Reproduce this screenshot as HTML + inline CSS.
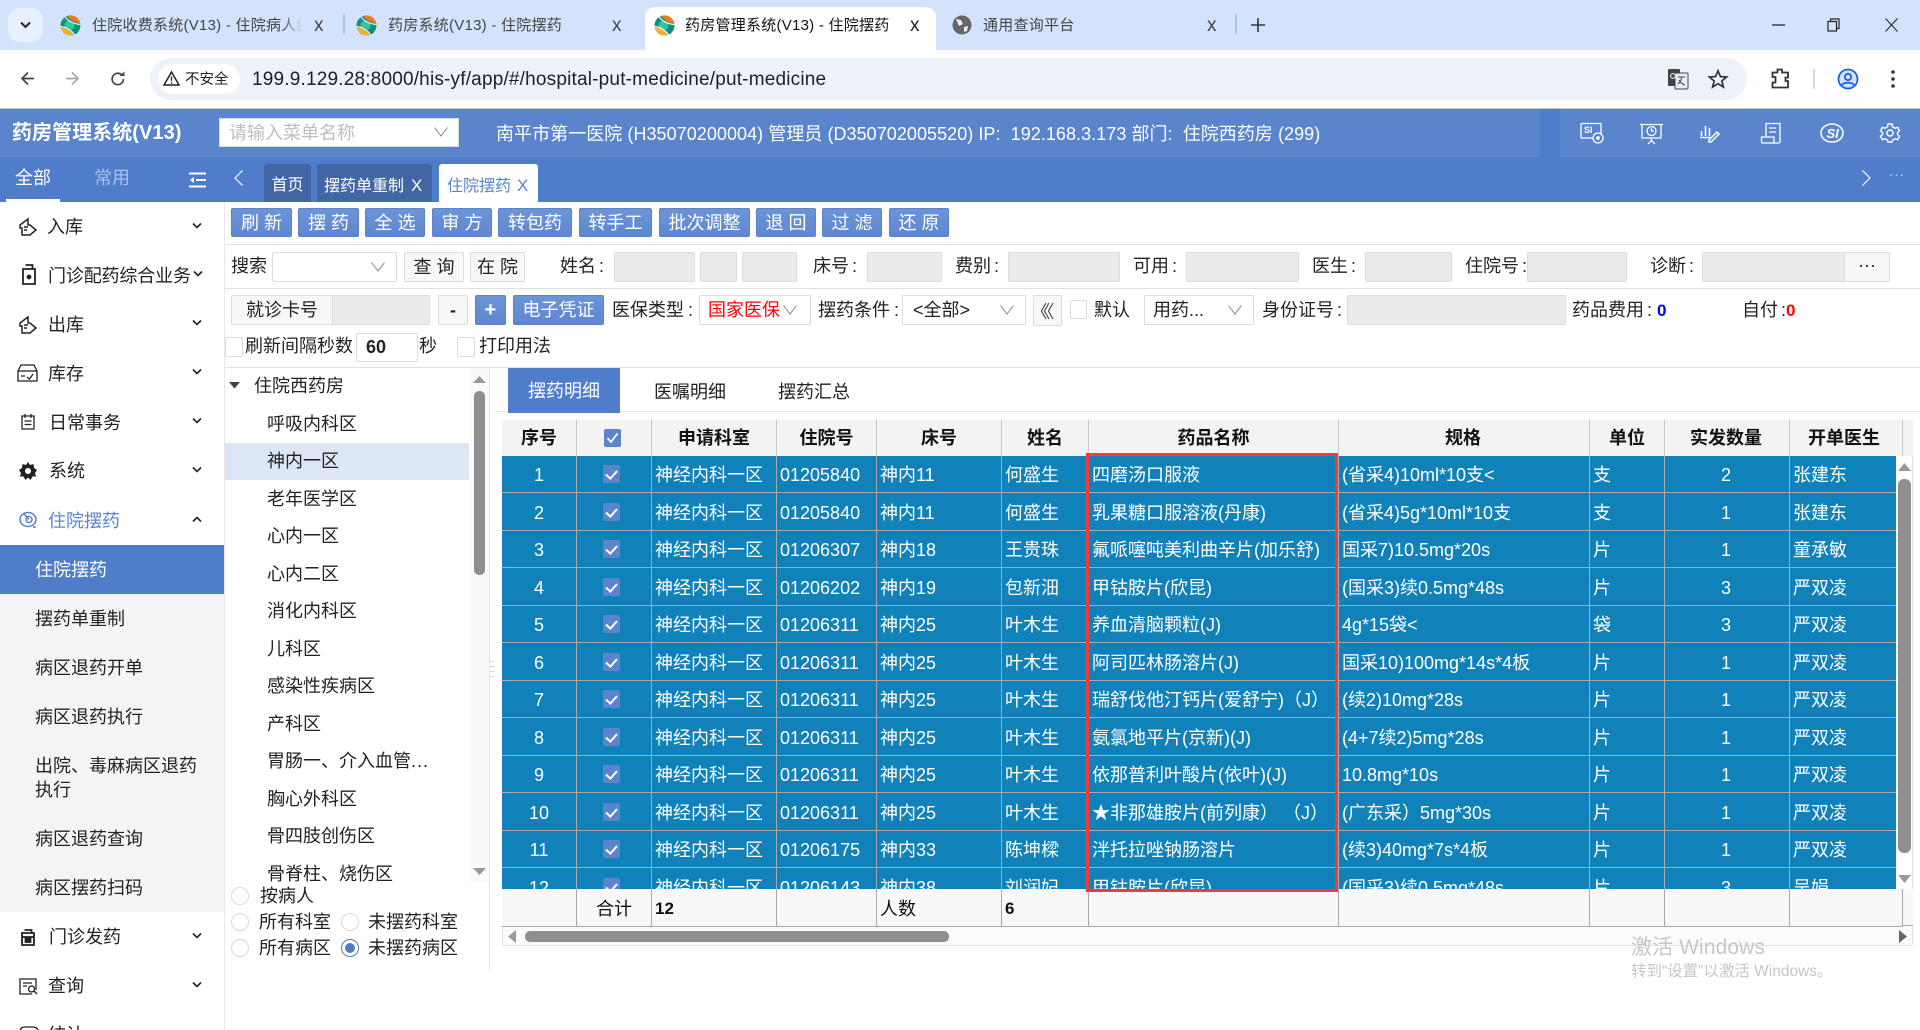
<!DOCTYPE html>
<html lang="zh-CN"><head><meta charset="utf-8"><title>药房管理系统(V13) - 住院摆药</title>
<style>
*{box-sizing:border-box}
html,body{margin:0;padding:0;width:1920px;height:1030px;overflow:hidden;background:#fff}
body{position:relative;font-family:"Liberation Sans","Noto Sans CJK SC",sans-serif;font-size:18px;color:#222}
.a{position:absolute}
.t{position:absolute;white-space:nowrap;line-height:26px;height:26px}
svg{position:absolute;overflow:visible}
.tab{font-size:15px;color:#444;line-height:20px;height:20px;top:16px;letter-spacing:.25px}
.x{position:absolute;top:16px;font-size:19px;line-height:20px;color:#444;font-family:"Liberation Sans",sans-serif}
.btn{position:absolute;top:208px;height:29px;background:linear-gradient(#6c94d8,#5f87ce);border:1px solid #5a83cc;border-radius:2px;color:#fff;text-align:center;line-height:29px;font-size:18px;white-space:nowrap}
.inp{position:absolute;background:#ebebeb;border:1px solid #dcdcdc;border-radius:2px}
.wbtn{position:absolute;background:#f7f7f7;border:1px solid #dcdcdc;border-radius:2px;text-align:center;font-size:18px;white-space:nowrap}
.sel{position:absolute;background:#fff;border:1px solid #dcdcdc;border-radius:2px;white-space:nowrap;font-size:18px}
.chk{position:absolute;width:18px;height:20px;border:1px solid #dcdcdc;border-radius:2px;background:#fff}
.menu{position:absolute;left:48px;line-height:26px;height:26px;font-size:18px;white-space:nowrap;color:#222}
.sub{position:absolute;left:35px;line-height:24px;font-size:18px;color:#222;white-space:nowrap}
.chev{position:absolute;left:192px;width:10px;height:10px}
.tree{position:absolute;left:267px;line-height:26px;height:26px;font-size:18px;white-space:nowrap}
.radio{position:absolute;width:18px;height:18px;border:1px solid #d9d9d9;border-radius:50%;background:#fff}
table{border-collapse:separate;border-spacing:0;table-layout:fixed;position:absolute}
#hd td{height:36px;background:#f3f3f3;font-weight:bold;text-align:center;border-right:1px solid #c8c8c8;color:#111;padding:0;line-height:36px;font-size:18px;white-space:nowrap}
#hd span{position:relative}
#bd td{background:#1182b9;color:#fff;border-right:1px solid #a9a9a9;border-bottom:1px solid #a9a9a9;padding:2px 0 0 3px;font-size:18px;white-space:nowrap;overflow:hidden;line-height:26px}
#bd tr:nth-child(odd) td{height:37px}
#bd tr:nth-child(even) td{height:38px}
#bd td.c{text-align:center;padding:2px 0 0 0}
#bd td.q{text-align:center;padding:2px 2px 0 0}
#bd i{display:block;position:relative;left:-3px;top:-1px;width:17px;height:18px;margin:0 auto;background:#5b84cc;border-radius:2px}
#bd i:after{content:"";position:absolute;left:5px;top:3px;width:5px;height:9px;border:solid #fff;border-width:0 2px 2px 0;transform:rotate(42deg)}
#ft td{height:37px;background:#f8f8f8;border-right:1px solid #a9a9a9;border-bottom:1px solid #a9a9a9;padding:2px 0 0 3px;color:#111;font-size:18px;white-space:nowrap;line-height:34px}
</style></head><body>

<!-- browser tab strip -->
<div class="a" style="left:0;top:0;width:1920px;height:50px;background:#d3e3fd"></div>
<div class="a" style="left:8px;top:8px;width:35px;height:34px;background:#e9f0fd;border-radius:12px"></div>
<svg style="left:20px;top:21px" width="11" height="8" viewBox="0 0 11 8"><path d="M1 1.500L5.500 6 10 1.500" fill="none" stroke="#222" stroke-width="2"/></svg>
<svg style="left:60px;top:15px" width="21" height="21" viewBox="0 0 21 21"><circle cx="10.500" cy="10.500" r="10" fill="#0f8f7c"/><circle cx="9.500" cy="10.500" r="5" fill="#39c2a0"/><path d="M7 1A10 10 0 0 1 20.300 8.500C16 8 11.500 6 7 1Z" fill="#ee7a1a"/><path d="M.7 12.500A10 10 0 0 0 13.500 20C11.500 16 6 13 .7 12.500Z" fill="#f2b32a"/><path d="M5 1.800C8 6 13 8.800 20.500 9.500M.5 11.500C6 12 12 15.500 14.500 19.800" fill="none" stroke="#e8f1fd" stroke-width="1.200"/></svg>
<div class="t tab" style="left:92px;width:210px;overflow:hidden;-webkit-mask-image:linear-gradient(90deg,#000 190px,transparent 210px)">住院收费系统(V13) - 住院病人结算</div>
<div class="x" style="left:314px">x</div>
<div class="a" style="left:343px;top:14px;width:2px;height:20px;background:#a8c3ec"></div>
<svg style="left:356px;top:15px" width="21" height="21" viewBox="0 0 21 21"><circle cx="10.500" cy="10.500" r="10" fill="#0f8f7c"/><circle cx="9.500" cy="10.500" r="5" fill="#39c2a0"/><path d="M7 1A10 10 0 0 1 20.300 8.500C16 8 11.500 6 7 1Z" fill="#ee7a1a"/><path d="M.7 12.500A10 10 0 0 0 13.500 20C11.500 16 6 13 .7 12.500Z" fill="#f2b32a"/><path d="M5 1.800C8 6 13 8.800 20.500 9.500M.5 11.500C6 12 12 15.500 14.500 19.800" fill="none" stroke="#e8f1fd" stroke-width="1.200"/></svg>
<div class="t tab" style="left:388px">药房系统(V13) - 住院摆药</div>
<div class="x" style="left:612px">x</div>
<div class="a" style="left:645px;top:7px;width:291px;height:43px;background:#fff;border-radius:10px 10px 0 0"></div>
<svg style="left:654px;top:15px" width="21" height="21" viewBox="0 0 21 21"><circle cx="10.500" cy="10.500" r="10" fill="#0f8f7c"/><circle cx="9.500" cy="10.500" r="5" fill="#39c2a0"/><path d="M7 1A10 10 0 0 1 20.300 8.500C16 8 11.500 6 7 1Z" fill="#ee7a1a"/><path d="M.7 12.500A10 10 0 0 0 13.500 20C11.500 16 6 13 .7 12.500Z" fill="#f2b32a"/><path d="M5 1.800C8 6 13 8.800 20.500 9.500M.5 11.500C6 12 12 15.500 14.500 19.800" fill="none" stroke="#fff" stroke-width="1.200"/></svg>
<div class="t tab" style="left:685px;color:#111">药房管理系统(V13) - 住院摆药</div>
<div class="x" style="left:910px;color:#222">x</div>
<svg style="left:952px;top:15px" width="20" height="20" viewBox="0 0 20 20"><circle cx="10" cy="10" r="9.500" fill="#666"/><path d="M4 4l5 1 2 4-4 2zM12 12l4-1-1 5-3 1z" fill="#e8eefb"/></svg>
<div class="t tab" style="left:983px">通用查询平台</div>
<div class="x" style="left:1207px">x</div>
<div class="a" style="left:1235px;top:14px;width:2px;height:20px;background:#a8c3ec"></div>
<svg style="left:1251px;top:18px" width="14" height="14" viewBox="0 0 14 14"><path d="M7 0V14M0 7H14" stroke="#333" stroke-width="1.600"/></svg>
<svg style="left:1772px;top:24px" width="13" height="2" viewBox="0 0 13 2"><path d="M0 1H13" stroke="#222" stroke-width="1.300"/></svg>
<svg style="left:1827px;top:18px" width="13" height="14" viewBox="0 0 13 14"><path d="M1 3.500H9.500V13H1ZM3.500 3.500V1H12V10.500H9.500" fill="none" stroke="#222" stroke-width="1.200"/></svg>
<svg style="left:1885px;top:18px" width="13" height="14" viewBox="0 0 13 14"><path d="M.5 .5L12.500 13.500M12.500 .5L.5 13.500" stroke="#222" stroke-width="1"/></svg>

<!-- browser toolbar -->
<div class="a" style="left:0;top:50px;width:1920px;height:59px;background:#fff;border-radius:10px 10px 0 0;border-bottom:1px solid #c8c8c8"></div>
<svg style="left:20px;top:71px" width="15" height="15" viewBox="0 0 15 15"><path d="M14 7.500H2M8 1.500L2 7.500l6 6" fill="none" stroke="#444" stroke-width="1.700"/></svg>
<svg style="left:65px;top:71px" width="15" height="15" viewBox="0 0 15 15"><path d="M1 7.500H13M7 1.500l6 6-6 6" fill="none" stroke="#aaa" stroke-width="1.700"/></svg>
<svg style="left:110px;top:71px" width="16" height="16" viewBox="0 0 16 16"><path d="M13.500 8A5.700 5.700 0 1 1 11.800 3.900" fill="none" stroke="#444" stroke-width="1.700"/><path d="M9.500 5h5V.5z" fill="#444"/></svg>
<div class="a" style="left:150px;top:58px;width:1597px;height:42px;background:#edf2fa;border-radius:21px"></div>
<div class="a" style="left:158px;top:64px;width:82px;height:30px;background:#fff;border-radius:15px"></div>
<svg style="left:163px;top:70px" width="17" height="17" viewBox="0 0 17 17"><path d="M8.500 2L16 15H1Z" fill="none" stroke="#222" stroke-width="1.500"/><path d="M8.500 6.500V11M8.500 12.200V13.800" stroke="#222" stroke-width="1.300"/></svg>
<div class="t" style="left:185px;top:69px;font-size:14.500px;line-height:22px;height:22px;color:#222">不安全</div>
<div class="t" style="left:252px;top:67px;font-size:19px;color:#1f1f1f;letter-spacing:.19px">199.9.129.28:8000/his-yf/app/#/hospital-put-medicine/put-medicine</div>
<svg style="left:1667px;top:68px" width="22" height="22" viewBox="0 0 22 22"><rect x="1" y="1" width="12" height="17" rx="1" fill="#444"/><rect x="8" y="5" width="13" height="16" rx="1" fill="#e8edf5" stroke="#444"/><path d="M11 9h7M14.500 9v1c-.5 3-2 5-4 6M12 12c1 2 3 4 6 5" fill="none" stroke="#444"/><circle cx="6" cy="8" r="2.400" fill="none" stroke="#fff"/></svg>
<svg style="left:1708px;top:69px" width="20" height="20" viewBox="0 0 20 20"><path d="M10 1.800L12.400 7.600 18.600 8 13.800 12 15.400 18 10 14.700 4.600 18 6.200 12 1.400 8 7.600 7.600Z" fill="none" stroke="#333" stroke-width="1.700"/></svg>
<svg style="left:1771px;top:68px" width="19" height="21" viewBox="0 0 19 21"><path d="M1.500 4.500H6.500V1.500H11V4.500H17V9.500H14.500V13H17V19.500H1.500V14.500H4.500V9H1.500Z" fill="none" stroke="#333" stroke-width="1.800"/></svg>
<div class="a" style="left:1813px;top:69px;width:2px;height:20px;background:#c7d7ef"></div>
<svg style="left:1837px;top:68px" width="22" height="22" viewBox="0 0 22 22"><circle cx="11" cy="11" r="9.500" fill="#d3e3fd" stroke="#1a63d8" stroke-width="1.800"/><circle cx="11" cy="9" r="3.200" fill="none" stroke="#1a63d8" stroke-width="1.800"/><path d="M5 17c2-3 10-3 12 0" fill="none" stroke="#1a63d8" stroke-width="1.800"/></svg>
<svg style="left:1891px;top:70px" width="4" height="18" viewBox="0 0 4 18"><circle cx="2" cy="2" r="1.800" fill="#333"/><circle cx="2" cy="9" r="1.800" fill="#333"/><circle cx="2" cy="16" r="1.800" fill="#333"/></svg>

<!-- app header -->
<div class="a" style="left:0;top:109px;width:1920px;height:48px;background:#5a84cc"></div>
<div class="a" style="left:1540px;top:109px;width:20px;height:48px;background:#4f7dc9"></div>
<div class="t" style="left:12px;top:120px;font-size:20px;font-weight:bold;color:#fff;letter-spacing:.05px">药房管理系统(V13)</div>
<div class="a" style="left:219px;top:118px;width:240px;height:29px;background:#fff;border:1px solid #dcdcdc"></div>
<div class="t" style="left:229px;top:120px;color:#bdbdbd">请输入菜单名称</div>
<svg style="left:434px;top:127px" width="14" height="10" viewBox="0 0 14 10"><path d="M.5 .5L7 9 13.500 .5" fill="none" stroke="#888" stroke-width="1"/></svg>
<div class="t" style="left:496px;top:121px;font-size:18px;color:#fff;letter-spacing:.05px">南平市第一医院 (H35070200004) 管理员 (D350702005520) IP:&nbsp; 192.168.3.173 部门:&nbsp; 住院西药房 (299)</div>

<svg style="left:1580px;top:122px" width="24" height="22" viewBox="0 0 24 22" fill="none" stroke="#fff" stroke-width="1.300"><path d="M21 13V2.500Q21 1.500 20 1.500H2Q1 1.500 1 2.500V15Q1 16 2 16H13"/><circle cx="18" cy="16" r="5"/><circle cx="18" cy="16" r="1.200" fill="#fff"/><text x="4" y="11" font-size="9" fill="#fff" stroke="none" font-weight="bold" font-family="Liberation Sans">SI</text></svg>
<svg style="left:1640px;top:123px" width="23" height="22" viewBox="0 0 23 22" fill="none" stroke="#fff" stroke-width="1.300"><path d="M0 1.500H23M2 1.500V15H21V1.500M11.500 15V19"/><circle cx="11.500" cy="8" r="4.500"/><path d="M11.500 5V8H14" /><path d="M8 21L11.500 17.500 15 21"/></svg>
<svg style="left:1700px;top:122px" width="20" height="22" viewBox="0 0 20 22" fill="none" stroke="#fff" stroke-width="1.500"><path d="M1.500 9V14M5.500 4V14M9.500 6V14M0 15.500H11"/><path d="M17 10L19 12 11 20H9V18Z"/></svg>
<svg style="left:1761px;top:122px" width="20" height="22" viewBox="0 0 20 22" fill="none" stroke="#fff" stroke-width="1.300"><path d="M5 1.500H19V19Q19 21 17 21H2Q.5 21 .5 19V15H5ZM5 15H13V21M8 6H15M8 10H15"/></svg>
<svg style="left:1820px;top:123px" width="24" height="20" viewBox="0 0 24 20" fill="none" stroke="#fff" stroke-width="1.500"><ellipse cx="12" cy="10" rx="11" ry="9"/><text x="6.500" y="15" font-size="13" fill="#fff" stroke="none" font-weight="bold" font-style="italic" font-family="Liberation Sans">SI</text></svg>
<svg style="left:1880px;top:123px" width="20" height="20" viewBox="0 0 20 20" fill="none" stroke="#fff" stroke-width="1.400"><path d="M8 1H12L12.600 3.800 15 5.200 17.700 4.300 19.500 7.700 17.500 9.500V11.500L19.500 13.300 17.700 16.700 15 15.800 12.600 17.200 12 19H8L7.400 17.200 5 15.800 2.300 16.700.5 13.300 2.500 11.500V9.500L.5 7.700 2.300 4.300 5 5.200 7.400 3.800Z"/><circle cx="10" cy="10" r="3"/></svg>

<!-- tab row -->
<div class="a" style="left:0;top:157px;width:1920px;height:45px;background:#4f7dc9"></div>
<div class="t" style="left:15px;top:165px;color:#fff">全部</div>
<div class="t" style="left:94px;top:165px;color:#a9c0e6">常用</div>
<div class="a" style="left:6px;top:199px;width:54px;height:3px;background:#fff"></div>
<svg style="left:189px;top:172px" width="17" height="16" viewBox="0 0 17 16"><path d="M0 1.500H17M7 8H17M0 14.500H17" stroke="#fff" stroke-width="2"/><path d="M5 5L1 8 5 11Z" fill="#fff"/></svg>
<svg style="left:234px;top:170px" width="9" height="16" viewBox="0 0 9 16"><path d="M8.500 .5L1 8 8.500 15.500" fill="none" stroke="#fff" stroke-width="1.200"/></svg>
<div class="a" style="left:264px;top:164px;width:47px;height:38px;background:#4265a4;border-radius:3px 3px 0 0;color:#fff;text-align:center;line-height:44px;font-size:16px">首页</div>
<div class="a" style="left:317px;top:164px;width:115px;height:38px;background:#4265a4;border-radius:3px 3px 0 0;color:#fff;line-height:44px;padding-left:7px;font-size:16px;white-space:nowrap">摆药单重制<span style="font-size:17px;margin-left:7px">X</span></div>
<div class="a" style="left:439px;top:164px;width:99px;height:38px;background:#fff;border-radius:3px 3px 0 0;color:#5a84cc;line-height:44px;padding-left:8px;font-size:16px;white-space:nowrap">住院摆药<span style="font-size:17px;margin-left:6px">X</span></div>
<svg style="left:1862px;top:170px" width="9" height="16" viewBox="0 0 9 16"><path d="M.5 .5L8 8 .5 15.500" fill="none" stroke="#fff" stroke-width="1.200"/></svg>
<div class="t" style="left:1889px;top:165px;color:#cfdcf2;font-size:13px;line-height:20px;letter-spacing:1px">···</div>

<!-- sidebar -->
<div class="a" style="left:224px;top:202px;width:1px;height:828px;background:#e8e8e8"></div>
<div class="a" style="left:0;top:545px;width:224px;height:367px;background:#f4f4f4"></div>
<div class="a" style="left:0;top:545px;width:224px;height:49px;background:#4f7dc9"></div>

<svg style="left:19px;top:218px" width="18" height="18" viewBox="0 0 18 18" fill="none" stroke="#222" stroke-width="1.500"><path d="M9 1L1 7V10H3V17H11L17 12 11 7H9L9 1ZM5 9H9M5 12H8"/></svg>
<div class="menu" style="top:214px;left:47px">入库</div>
<svg style="left:22px;top:264px" width="14" height="22" viewBox="0 0 14 22" fill="none" stroke="#222" stroke-width="1.800"><path d="M3.500 1H10.500V5M1 5H13V20H1Z"/><circle cx="7" cy="13" r="1.500" fill="#222"/></svg>
<div class="menu" style="top:263px;font-size:18px;letter-spacing:-.15px">门诊配药综合业务</div>
<svg style="left:19px;top:316px" width="18" height="18" viewBox="0 0 18 18" fill="none" stroke="#222" stroke-width="1.500"><path d="M9 1L1 7V10H3V17H11L17 12 11 7H9L9 1ZM5 9H9M5 12H8"/></svg>
<div class="menu" style="top:312px">出库</div>
<svg style="left:17px;top:364px" width="21" height="18" viewBox="0 0 21 18" fill="none" stroke="#222" stroke-width="1.300"><path d="M1 7L4 1H17L20 7V17H1ZM1 7H20M4 12H8M10 13L12.500 15 16 10"/></svg>
<div class="menu" style="top:361px">库存</div>
<svg style="left:21px;top:413px" width="14" height="18" viewBox="0 0 14 18" fill="none" stroke="#222" stroke-width="1.300"><path d="M1 3H13V16H1ZM4 1V5M10 1V5M3.500 8H10.500M3.500 11.500H10.500"/></svg>
<div class="menu" style="top:410px;left:49px">日常事务</div>
<svg style="left:19px;top:462px" width="18" height="18" viewBox="0 0 18 18"><path d="M9 0L11 3 14.500 2 15 6 18 8 16 11 17 14.500 13.500 14.500 11.500 18 9 15.500 6.500 18 4.500 14.500 1 14.500 2 11 0 8 3 6 3.500 2 7 3Z" fill="#222"/><circle cx="9" cy="9" r="3" fill="#fff"/></svg>
<div class="menu" style="top:458px;left:49px">系统</div>
<svg style="left:19px;top:511px" width="18" height="18" viewBox="0 0 18 18" fill="none" stroke="#5a84cc" stroke-width="1.500"><ellipse cx="9" cy="8.500" rx="8" ry="7"/><circle cx="10" cy="8.500" r="3"/><path d="M14 16H17M5 3L10 8.500"/></svg>
<div class="menu" style="top:508px;color:#5a84cc">住院摆药</div>
<div class="sub" style="top:558px;color:#fff">住院摆药</div>
<div class="sub" style="top:607px">摆药单重制</div>
<div class="sub" style="top:656px">病区退药开单</div>
<div class="sub" style="top:705px">病区退药执行</div>
<div class="sub" style="top:754px">出院、毒麻病区退药</div>
<div class="sub" style="top:778px">执行</div>
<div class="sub" style="top:827px">病区退药查询</div>
<div class="sub" style="top:876px">病区摆药扫码</div>
<svg style="left:21px;top:929px" width="14" height="18" viewBox="0 0 14 18" fill="none" stroke="#222" stroke-width="1.800"><path d="M3.500 1H10.500V4M1 4H13V16H1ZM1 8H13"/><rect x="4.500" y="9" width="5" height="4" fill="#222"/></svg>
<div class="menu" style="top:924px;left:49px">门诊发药</div>
<svg style="left:19px;top:978px" width="20" height="17" viewBox="0 0 20 17" fill="none" stroke="#222" stroke-width="1.300"><path d="M17 12V1H1V16H13M4 5H13M4 8H8"/><circle cx="12.500" cy="11" r="3"/><path d="M15 13L18 16"/></svg>
<div class="menu" style="top:973px">查询</div>
<svg style="left:19px;top:1026px" width="20" height="12" viewBox="0 0 20 12" fill="none" stroke="#222" stroke-width="1.300"><path d="M1 12V6Q1 1 6 1H14Q19 1 19 6"/></svg>
<div class="menu" style="top:1022px">统计</div>
<svg class="chev" style="top:221px" viewBox="0 0 10 10"><path d="M1 2.500L5 6.500 9 2.500" fill="none" stroke="#222" stroke-width="1.600"/></svg>
<svg class="chev" style="top:269px;left:193px" viewBox="0 0 10 10"><path d="M1 2.500L5 6.500 9 2.500" fill="none" stroke="#222" stroke-width="1.600"/></svg>
<svg class="chev" style="top:318px" viewBox="0 0 10 10"><path d="M1 2.500L5 6.500 9 2.500" fill="none" stroke="#222" stroke-width="1.600"/></svg>
<svg class="chev" style="top:367px" viewBox="0 0 10 10"><path d="M1 2.500L5 6.500 9 2.500" fill="none" stroke="#222" stroke-width="1.600"/></svg>
<svg class="chev" style="top:416px" viewBox="0 0 10 10"><path d="M1 2.500L5 6.500 9 2.500" fill="none" stroke="#222" stroke-width="1.600"/></svg>
<svg class="chev" style="top:465px" viewBox="0 0 10 10"><path d="M1 2.500L5 6.500 9 2.500" fill="none" stroke="#222" stroke-width="1.600"/></svg>
<svg class="chev" style="top:515px" viewBox="0 0 10 10"><path d="M1 6.500L5 2.500 9 6.500" fill="none" stroke="#222" stroke-width="1.600"/></svg>
<svg class="chev" style="top:931px" viewBox="0 0 10 10"><path d="M1 2.500L5 6.500 9 2.500" fill="none" stroke="#222" stroke-width="1.600"/></svg>
<svg class="chev" style="top:980px" viewBox="0 0 10 10"><path d="M1 2.500L5 6.500 9 2.500" fill="none" stroke="#222" stroke-width="1.600"/></svg>

<!-- toolbar buttons -->
<div class="btn" style="left:231px;width:61px">刷 新</div>
<div class="btn" style="left:298px;width:61px">摆 药</div>
<div class="btn" style="left:365px;width:60px">全 选</div>
<div class="btn" style="left:432px;width:60px">审 方</div>
<div class="btn" style="left:498px;width:74px">转包药</div>
<div class="btn" style="left:579px;width:73px">转手工</div>
<div class="btn" style="left:659px;width:91px">批次调整</div>
<div class="btn" style="left:756px;width:60px">退 回</div>
<div class="btn" style="left:822px;width:60px">过 滤</div>
<div class="btn" style="left:889px;width:60px">还 原</div>
<div class="a" style="left:225px;top:244px;width:1695px;height:1px;background:#e0e0e0"></div>

<!-- row 2 -->
<div class="t" style="left:231px;top:253px">搜索</div>
<div class="sel" style="left:272px;top:252px;width:125px;height:30px"></div>
<svg style="left:371px;top:262px" width="14" height="10" viewBox="0 0 14 10"><path d="M.5 .5L7 9 13.500 .5" fill="none" stroke="#888"/></svg>
<div class="wbtn" style="left:404px;top:252px;width:60px;height:30px;line-height:28px">查 询</div>
<div class="wbtn" style="left:470px;top:252px;width:55px;height:30px;line-height:28px">在 院</div>
<div class="t" style="left:560px;top:253px">姓名<span style="margin-left:3px">:</span></div>
<div class="inp" style="left:614px;top:252px;width:81px;height:30px"></div>
<div class="inp" style="left:700px;top:252px;width:37px;height:30px"></div>
<div class="inp" style="left:742px;top:252px;width:55px;height:30px"></div>
<div class="t" style="left:813px;top:253px">床号<span style="margin-left:3px">:</span></div>
<div class="inp" style="left:867px;top:252px;width:75px;height:30px"></div>
<div class="t" style="left:955px;top:253px">费别<span style="margin-left:3px">:</span></div>
<div class="inp" style="left:1008px;top:252px;width:112px;height:30px"></div>
<div class="t" style="left:1133px;top:253px">可用<span style="margin-left:3px">:</span></div>
<div class="inp" style="left:1186px;top:252px;width:113px;height:30px"></div>
<div class="t" style="left:1312px;top:253px">医生<span style="margin-left:3px">:</span></div>
<div class="inp" style="left:1365px;top:252px;width:87px;height:30px"></div>
<div class="t" style="left:1465px;top:253px">住院号<span style="margin-left:3px">:</span></div>
<div class="inp" style="left:1527px;top:252px;width:100px;height:30px"></div>
<div class="t" style="left:1650px;top:253px">诊断<span style="margin-left:3px">:</span></div>
<div class="inp" style="left:1702px;top:252px;width:143px;height:30px;border-radius:2px 0 0 2px"></div>
<div class="wbtn" style="left:1844px;top:252px;width:46px;height:30px;line-height:24px;border-radius:0 2px 2px 0">···</div>
<div class="a" style="left:225px;top:288px;width:1695px;height:1px;background:#e0e0e0"></div>

<!-- row 3 -->
<div class="wbtn" style="left:231px;top:295px;width:102px;height:30px;line-height:28px;border-radius:2px 0 0 2px">就诊卡号</div>
<div class="inp" style="left:332px;top:295px;width:98px;height:30px;border-radius:0 2px 2px 0"></div>
<div class="wbtn" style="left:438px;top:295px;width:30px;height:30px;line-height:28px;font-weight:bold">-</div>
<div class="btn" style="left:475px;top:295px;width:31px;height:30px;font-size:20px;font-weight:bold;line-height:28px">+</div>
<div class="btn" style="left:513px;top:295px;width:91px;height:30px;line-height:28px">电子凭证</div>
<div class="t" style="left:612px;top:297px">医保类型<span style="margin-left:4px">:</span></div>
<div class="sel" style="left:699px;top:295px;width:112px;height:30px;color:#f00;line-height:28px;padding-left:8px">国家医保</div>
<svg style="left:783px;top:305px" width="14" height="10" viewBox="0 0 14 10"><path d="M.5 .5L7 9 13.500 .5" fill="none" stroke="#888"/></svg>
<div class="t" style="left:818px;top:297px">摆药条件<span style="margin-left:4px">:</span></div>
<div class="sel" style="left:902px;top:295px;width:124px;height:30px;line-height:28px;padding-left:10px">&lt;全部&gt;</div>
<svg style="left:1000px;top:305px" width="14" height="10" viewBox="0 0 14 10"><path d="M.5 .5L7 9 13.500 .5" fill="none" stroke="#888"/></svg>
<div class="wbtn" style="left:1033px;top:295px;width:29px;height:31px"></div>
<svg style="left:1040px;top:303px" width="15" height="16" viewBox="0 0 15 16"><path d="M6 0L1.500 8 6 16M9 0L4.500 8 9 16M13 0L8.500 8 13 16" fill="none" stroke="#444" stroke-width="1.100"/></svg>
<div class="chk" style="left:1070px;top:300px;width:17px;height:19px"></div>
<div class="t" style="left:1094px;top:297px">默认</div>
<div class="sel" style="left:1144px;top:295px;width:110px;height:30px;line-height:28px;padding-left:8px">用药...</div>
<svg style="left:1228px;top:305px" width="14" height="10" viewBox="0 0 14 10"><path d="M.5 .5L7 9 13.500 .5" fill="none" stroke="#888"/></svg>
<div class="t" style="left:1262px;top:297px">身份证号<span style="margin-left:3px">:</span></div>
<div class="inp" style="left:1347px;top:295px;width:219px;height:30px"></div>
<div class="t" style="left:1572px;top:297px">药品费用<span style="margin-left:3px">:</span> <b style="color:#00f;font-weight:bold;font-size:17px">0</b></div>
<div class="t" style="left:1742px;top:297px">自付<span style="margin-left:3px">:</span><b style="color:#f00;font-weight:bold;font-size:17px">0</b></div>

<!-- row 4 -->
<div class="chk" style="left:225px;top:337px"></div>
<div class="t" style="left:245px;top:333px;letter-spacing:0">刷新间隔秒数</div>
<div class="sel" style="left:356px;top:333px;width:62px;height:29px;line-height:27px;padding-left:9px;font-weight:bold;font-size:18px">60</div>
<div class="t" style="left:419px;top:333px">秒</div>
<div class="chk" style="left:457px;top:337px"></div>
<div class="t" style="left:479px;top:333px">打印用法</div>
<div class="a" style="left:225px;top:367px;width:1695px;height:1px;background:#e0e0e0"></div>

<!-- tree -->
<div class="a" style="left:489px;top:368px;width:1px;height:602px;background:#e4e4e4"></div>
<div class="a" style="left:225px;top:443px;width:244px;height:37px;background:#dce6f5"></div>
<svg style="left:229px;top:382px" width="11" height="7" viewBox="0 0 11 7"><path d="M0 0H11L5.500 6.500Z" fill="#444"/></svg>
<div class="tree" style="left:254px;top:373px">住院西药房</div>
<div class="tree" style="top:411px">呼吸内科区</div>
<div class="tree" style="top:448px">神内一区</div>
<div class="tree" style="top:486px">老年医学区</div>
<div class="tree" style="top:523px">心内一区</div>
<div class="tree" style="top:561px">心内二区</div>
<div class="tree" style="top:598px">消化内科区</div>
<div class="tree" style="top:636px">儿科区</div>
<div class="tree" style="top:673px">感染性疾病区</div>
<div class="tree" style="top:711px">产科区</div>
<div class="tree" style="top:748px">胃肠一、介入血管<span style="letter-spacing:1px">...</span></div>
<div class="tree" style="top:786px">胸心外科区</div>
<div class="tree" style="top:823px">骨四肢创伤区</div>
<div class="tree" style="top:861px;height:22px;overflow:hidden">骨脊柱、烧伤区</div>
<div class="a" style="left:470px;top:368px;width:19px;height:515px;background:#fafafa"></div>
<div class="a" style="left:474px;top:391px;width:11px;height:184px;background:#8f8f8f;border-radius:5px"></div>
<svg style="left:473px;top:376px" width="13" height="7" viewBox="0 0 13 7"><path d="M6.500 0L13 7H0Z" fill="#999"/></svg>
<svg style="left:473px;top:868px" width="13" height="7" viewBox="0 0 13 7"><path d="M0 0H13L6.500 7Z" fill="#999"/></svg>
<div class="a" style="left:490px;top:661px;width:5px;height:1px;background:#ddd"></div>
<div class="a" style="left:490px;top:666px;width:5px;height:1px;background:#ddd"></div>
<div class="a" style="left:490px;top:671px;width:5px;height:1px;background:#ddd"></div>
<div class="a" style="left:490px;top:676px;width:5px;height:1px;background:#ddd"></div>

<div class="radio" style="left:231px;top:887px"></div>
<div class="t" style="left:260px;top:883px">按病人</div>
<div class="radio" style="left:231px;top:913px"></div>
<div class="t" style="left:259px;top:909px">所有科室</div>
<div class="radio" style="left:341px;top:913px"></div>
<div class="t" style="left:368px;top:909px">未摆药科室</div>
<div class="radio" style="left:231px;top:939px"></div>
<div class="t" style="left:259px;top:935px">所有病区</div>
<div class="radio" style="left:341px;top:939px;border-color:#4f7dc9"></div>
<div class="a" style="left:345px;top:943px;width:10px;height:10px;border-radius:50%;background:#4f7dc9"></div>
<div class="t" style="left:368px;top:935px">未摆药病区</div>

<!-- sub tabs -->
<div class="a" style="left:495px;top:411px;width:1425px;height:1px;background:#e4e4e4"></div>
<div class="a" style="left:508px;top:368px;width:112px;height:45px;background:#4f7dc9;color:#fff;text-align:center;line-height:46px">摆药明细</div>
<div class="t" style="left:654px;top:379px">医嘱明细</div>
<div class="t" style="left:778px;top:379px">摆药汇总</div>

<!-- table frame -->
<div class="a" style="left:502px;top:420px;width:1411px;height:526px;border:1px solid #e2e2e2;border-radius:2px"></div>
<div class="a" style="left:502px;top:420px;width:1411px;height:36px;background:#f3f3f3"></div>
<table id="hd" style="left:502px;top:420px;width:1401px"><colgroup><col style="width:75px"><col style="width:75px"><col style="width:125px"><col style="width:100px"><col style="width:125px"><col style="width:87px"><col style="width:250px"><col style="width:251px"><col style="width:75px"><col style="width:125px"><col style="width:113px"></colgroup>
<tr><td>序号</td><td></td><td>申请科室</td><td>住院号</td><td>床号</td><td>姓名</td><td>药品名称</td><td><span style="left:-1px">规格</span></td><td>单位</td><td><span style="left:-1px">实发数量</span></td><td><span style="left:-2px">开单医生</span></td></tr></table>
<div class="a" style="left:604px;top:429px;width:17px;height:18px;background:#5b84cc;border-radius:2px"></div>
<svg style="left:606px;top:432px" width="13" height="12" viewBox="0 0 13 12"><path d="M1.500 6L5 10 11.500 1.500" fill="none" stroke="#fff" stroke-width="1.800"/></svg>

<div class="a" style="left:502px;top:456px;width:1394px;height:433px;overflow:hidden">
<table id="bd" style="left:0;top:0;width:1401px"><colgroup><col style="width:75px"><col style="width:75px"><col style="width:125px"><col style="width:100px"><col style="width:125px"><col style="width:87px"><col style="width:250px"><col style="width:251px"><col style="width:75px"><col style="width:125px"><col style="width:113px"></colgroup>
<tr><td class="c">1</td><td class="c"><i></i></td><td>神经内科一区</td><td>01205840</td><td>神内11</td><td>何盛生</td><td>四磨汤口服液</td><td>(省采4)10ml*10支&lt;</td><td>支</td><td class="q">2</td><td>张建东</td></tr>
<tr><td class="c">2</td><td class="c"><i></i></td><td>神经内科一区</td><td>01205840</td><td>神内11</td><td>何盛生</td><td>乳果糖口服溶液(丹康)</td><td>(省采4)5g*10ml*10支</td><td>支</td><td class="q">1</td><td>张建东</td></tr>
<tr><td class="c">3</td><td class="c"><i></i></td><td>神经内科一区</td><td>01206307</td><td>神内18</td><td>王贵珠</td><td>氟哌噻吨美利曲辛片(加乐舒)</td><td>国采7)10.5mg*20s</td><td>片</td><td class="q">1</td><td>童承敏</td></tr>
<tr><td class="c">4</td><td class="c"><i></i></td><td>神经内科一区</td><td>01206202</td><td>神内19</td><td>包新沺</td><td>甲钴胺片(欣昆)</td><td>(国采3)续0.5mg*48s</td><td>片</td><td class="q">3</td><td>严双凌</td></tr>
<tr><td class="c">5</td><td class="c"><i></i></td><td>神经内科一区</td><td>01206311</td><td>神内25</td><td>叶木生</td><td>养血清脑颗粒(J)</td><td>4g*15袋&lt;</td><td>袋</td><td class="q">3</td><td>严双凌</td></tr>
<tr><td class="c">6</td><td class="c"><i></i></td><td>神经内科一区</td><td>01206311</td><td>神内25</td><td>叶木生</td><td>阿司匹林肠溶片(J)</td><td>国采10)100mg*14s*4板</td><td>片</td><td class="q">1</td><td>严双凌</td></tr>
<tr><td class="c">7</td><td class="c"><i></i></td><td>神经内科一区</td><td>01206311</td><td>神内25</td><td>叶木生</td><td>瑞舒伐他汀钙片(爱舒宁)（J）</td><td>(续2)10mg*28s</td><td>片</td><td class="q">1</td><td>严双凌</td></tr>
<tr><td class="c">8</td><td class="c"><i></i></td><td>神经内科一区</td><td>01206311</td><td>神内25</td><td>叶木生</td><td>氨氯地平片(京新)(J)</td><td>(4+7续2)5mg*28s</td><td>片</td><td class="q">1</td><td>严双凌</td></tr>
<tr><td class="c">9</td><td class="c"><i></i></td><td>神经内科一区</td><td>01206311</td><td>神内25</td><td>叶木生</td><td>依那普利叶酸片(依叶)(J)</td><td>10.8mg*10s</td><td>片</td><td class="q">1</td><td>严双凌</td></tr>
<tr><td class="c">10</td><td class="c"><i></i></td><td>神经内科一区</td><td>01206311</td><td>神内25</td><td>叶木生</td><td>★非那雄胺片(前列康） （J）</td><td>(广东采）5mg*30s</td><td>片</td><td class="q">1</td><td>严双凌</td></tr>
<tr><td class="c">11</td><td class="c"><i></i></td><td>神经内科一区</td><td>01206175</td><td>神内33</td><td>陈坤樑</td><td>泮托拉唑钠肠溶片</td><td>(续3)40mg*7s*4板</td><td>片</td><td class="q">1</td><td>严双凌</td></tr>
<tr><td class="c">12</td><td class="c"><i></i></td><td>神经内科一区</td><td>01206143</td><td>神内38</td><td>刘润妃</td><td>甲钴胺片(欣昆)</td><td>(国采3)续0.5mg*48s</td><td>片</td><td class="q">3</td><td>吴娟</td></tr>
</table></div>

<!-- footer row -->
<table id="ft" style="left:502px;top:889px;width:1401px"><colgroup><col style="width:75px"><col style="width:75px"><col style="width:125px"><col style="width:100px"><col style="width:125px"><col style="width:87px"><col style="width:250px"><col style="width:251px"><col style="width:75px"><col style="width:125px"><col style="width:113px"></colgroup>
<tr><td></td><td style="text-align:center;padding:2px 0 0 0">合计</td><td><span style="font-weight:bold;font-size:17px">12</span></td><td></td><td>人数</td><td><span style="font-weight:bold;font-size:17px">6</span></td><td></td><td></td><td></td><td></td><td></td></tr></table>
<div class="a" style="left:1903px;top:889px;width:10px;height:37px;background:#f8f8f8;border-bottom:1px solid #a9a9a9"></div>

<!-- scrollbars -->
<div class="a" style="left:1898px;top:479px;width:13px;height:374px;background:#8f8f8f;border-radius:6px"></div>
<svg style="left:1898px;top:463px" width="13" height="8" viewBox="0 0 13 8"><path d="M6.500 0L13 8H0Z" fill="#999"/></svg>
<svg style="left:1898px;top:875px" width="13" height="8" viewBox="0 0 13 8"><path d="M0 0H13L6.500 8Z" fill="#999"/></svg>
<div class="a" style="left:503px;top:927px;width:1409px;height:18px;background:#fbfbfb"></div>
<div class="a" style="left:525px;top:931px;width:424px;height:11px;background:#8f8f8f;border-radius:5px"></div>
<svg style="left:508px;top:930px" width="8" height="13" viewBox="0 0 8 13"><path d="M8 0V13L0 6.500Z" fill="#999"/></svg>
<svg style="left:1899px;top:930px" width="8" height="13" viewBox="0 0 8 13"><path d="M0 0V13L8 6.500Z" fill="#666"/></svg>

<!-- red highlight -->
<div class="a" style="left:1086px;top:453px;width:252px;height:439px;border:3px solid #f33b3b"></div>

<!-- watermark -->
<div class="t" style="left:1631px;top:935px;font-size:21px;color:#c6c6c6;letter-spacing:.1px">激活 Windows</div>
<div class="t" style="left:1631px;top:959px;font-size:15.500px;color:#c6c6c6">转到“设置”以激活 Windows。</div>
</body></html>
